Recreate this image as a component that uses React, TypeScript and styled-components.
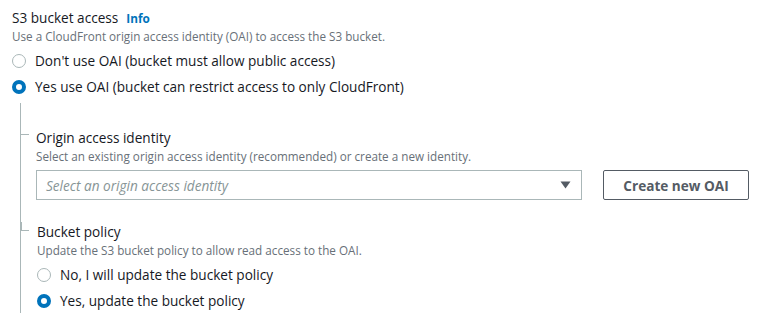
import React, { useState } from "react"
import styled, { createGlobalStyle } from "styled-components"

const GlobalStyle = createGlobalStyle`
    body {
        margin: 0;
        background: #ffffff;
        font-family: "Open Sans", "Noto Sans", sans-serif;
        color: #16191f;
    }
`

interface RadioOption {
    value: string
    label: string
}

interface RadioGroupI {
    name: string
    options: RadioOption[]
    value: string
    onChange(value: string): void
}

const RadioGroup: React.FunctionComponent<RadioGroupI> = ({ name, options, value, onChange }: RadioGroupI) => {
    return (
        <Group>
            {options.map((o) => (
                <RadioRow key={o.value}>
                    <HiddenInput
                        type="radio"
                        name={name}
                        checked={value === o.value}
                        onChange={() => onChange(o.value)}
                    />
                    <Circle checked={value === o.value} />
                    <RadioText>{o.label}</RadioText>
                </RadioRow>
            ))}
        </Group>
    )
}

const CaretDown = () => (
    <svg width="11" height="8" viewBox="0 0 11 8">
        <path d="M0.5 0.5 L10.5 0.5 L5.5 7.5 Z" fill="#545b64" />
    </svg>
)

export default function App() {
    const [access, setAccess] = useState("oai")
    const [policy, setPolicy] = useState("yes")

    return (
        <>
            <GlobalStyle />
            <Page>
                <TitleRow>
                    <Title>S3 bucket access</Title>
                    <InfoLink>Info</InfoLink>
                </TitleRow>
                <Description>Use a CloudFront origin access identity (OAI) to access the S3 bucket.</Description>
                <RadioGroup
                    name="access"
                    value={access}
                    onChange={setAccess}
                    options={[
                        { value: "none", label: "Don't use OAI (bucket must allow public access)" },
                        { value: "oai", label: "Yes use OAI (bucket can restrict access to only CloudFront)" },
                    ]}
                />

                <Nested>
                    <Section>
                        <Label>Origin access identity</Label>
                        <Description>Select an existing origin access identity (recommended) or create a new identity.</Description>
                        <ControlRow>
                            <Select>
                                <Placeholder>Select an origin access identity</Placeholder>
                                <CaretDown />
                            </Select>
                            <Button>Create new OAI</Button>
                        </ControlRow>
                    </Section>
                    <Section last>
                        <Label>Bucket policy</Label>
                        <Description>Update the S3 bucket policy to allow read access to the OAI.</Description>
                        <RadioGroup
                            name="policy"
                            value={policy}
                            onChange={setPolicy}
                            options={[
                                { value: "no", label: "No, I will update the bucket policy" },
                                { value: "yes", label: "Yes, update the bucket policy" },
                            ]}
                        />
                    </Section>
                </Nested>
            </Page>
        </>
    )
}

const Page = styled.div`
    padding: 8px 12px 0 12px;
`

const TitleRow = styled.div`
    display: flex;
    align-items: baseline;
    gap: 8px;
    height: 20px;
    line-height: 20px;
`

const Title = styled.span`
    font-size: 13.6px;
    color: #16191f;
`

const InfoLink = styled.a`
    font-size: 11.8px;
    font-weight: 700;
    color: #0073bb;
    cursor: pointer;
`

const Description = styled.div`
    font-size: 11.7px;
    line-height: 16px;
    color: #687078;
`

const Group = styled.div`
    display: flex;
    flex-direction: column;
    padding-top: 3px;
`

const RadioRow = styled.label`
    display: flex;
    align-items: center;
    gap: 9px;
    height: 26px;
    cursor: pointer;
`

const HiddenInput = styled.input`
    display: none;
`

const Circle = styled.span<{ checked: boolean }>`
    box-sizing: border-box;
    width: 14px;
    height: 14px;
    border-radius: 50%;
    flex-shrink: 0;
    margin-top: 1px;
    background: #ffffff;
    border: ${(p) => (p.checked ? "4px solid #0073bb" : "1.5px solid #aab7b8")};
`

const RadioText = styled.span`
    font-size: 13.6px;
    color: #16191f;
`

const Nested = styled.div`
    margin: 4px 0 0 8px;
    padding-top: 25px;
    border-left: 1px solid #aab7b8;
`

const Section = styled.div<{ last?: boolean }>`
    position: relative;
    padding-left: 15px;
    padding-bottom: ${(p) => (p.last ? "0" : "22px")};

    &::before {
        content: "";
        position: absolute;
        left: 0;
        top: 6px;
        width: 8px;
        border-top: 1px solid #aab7b8;
    }

    ${(p) =>
        p.last &&
        `
        margin-left: -1px;
        padding-left: 16px;
        border-left: 1px solid transparent;
        background: linear-gradient(#aab7b8, #aab7b8) no-repeat 0 0 / 1px 9px;
        &::before { left: 0; top: 8px; }
    `}
`

const Label = styled.div`
    font-size: 13.6px;
    line-height: 20px;
    color: #16191f;
`

const ControlRow = styled.div`
    display: flex;
    gap: 21px;
    margin-top: 6px;
`

const Select = styled.div`
    box-sizing: border-box;
    width: 546px;
    height: 30px;
    display: flex;
    align-items: center;
    justify-content: space-between;
    padding: 0 10px 0 9px;
    border: 1px solid #aab7b8;
    background: #ffffff;
`

const Placeholder = styled.span`
    font-size: 13.6px;
    font-style: italic;
    color: #879596;
`

const Button = styled.button`
    box-sizing: border-box;
    width: 146px;
    height: 30px;
    border: 1px solid #545b64;
    border-radius: 2px;
    background: #ffffff;
    color: #545b64;
    font-family: "Open Sans", "Noto Sans", sans-serif;
    font-size: 13.6px;
    font-weight: 700;
    cursor: pointer;
`
